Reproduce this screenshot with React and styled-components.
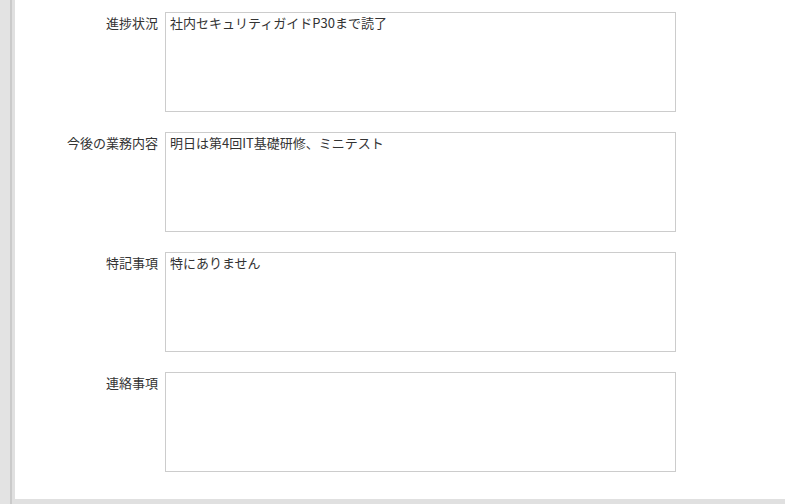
import React, { useState } from 'react';
import styled, { createGlobalStyle } from 'styled-components';

const GlobalStyle = createGlobalStyle`
	html, body {
		margin: 0;
		padding: 0;
		background: #e3e3e3;
		font-family: "Noto Sans CJK JP", "Noto Sans", sans-serif;
		color: #333;
	}
`;

const Frame = styled.div`
	height: 504px;
	padding-left: 10px;
	box-sizing: border-box;
	overflow: hidden;
`;

const Panel = styled.div`
	height: 506px;
	box-sizing: border-box;
	border-left: 2px solid #cacaca;
	border-bottom: 2px solid #cacaca;
	background: #e0e0e0;
	padding: 0 0 5px 3px;
`;

const Content = styled.div`
	height: 100%;
	background: #fff;
	padding-top: 12px;
	box-sizing: border-box;
	display: flex;
	flex-direction: column;
	gap: 20px;
`;

const Row = styled.div`
	display: flex;
	align-items: flex-start;
	gap: 7px;
`;

const Label = styled.label`
	width: 143px;
	padding-top: 2px;
	text-align: right;
	font-size: 13px;
	line-height: 18px;
	white-space: nowrap;
`;

const Memo = styled.textarea`
	width: 511px;
	height: 100px;
	box-sizing: border-box;
	margin: 0;
	padding: 1px 4px;
	border: 1px solid #cccccc;
	border-radius: 0;
	resize: none;
	outline: none;
	font-family: inherit;
	font-size: 13px;
	line-height: 18px;
	color: #333;
	background: #fff;
`;

const fields = [
	{ id: 'progress', label: '進捗状況', value: '社内セキュリティガイドP30まで読了' },
	{ id: 'next', label: '今後の業務内容', value: '明日は第4回IT基礎研修、ミニテスト' },
	{ id: 'notes', label: '特記事項', value: '特にありません' },
	{ id: 'contact', label: '連絡事項', value: '' },
];

function App() {
	const [values, setValues] = useState(() =>
		Object.fromEntries(fields.map(f => [f.id, f.value]))
	);

	return (
		<>
			<GlobalStyle />
			<Frame>
				<Panel>
					<Content>
						{fields.map(f => (
							<Row key={f.id}>
								<Label htmlFor={f.id}>{f.label}</Label>
								<Memo
									id={f.id}
									value={values[f.id]}
									onChange={e => setValues({ ...values, [f.id]: e.target.value })}
								/>
							</Row>
						))}
					</Content>
				</Panel>
			</Frame>
		</>
	);
}

export default App;
